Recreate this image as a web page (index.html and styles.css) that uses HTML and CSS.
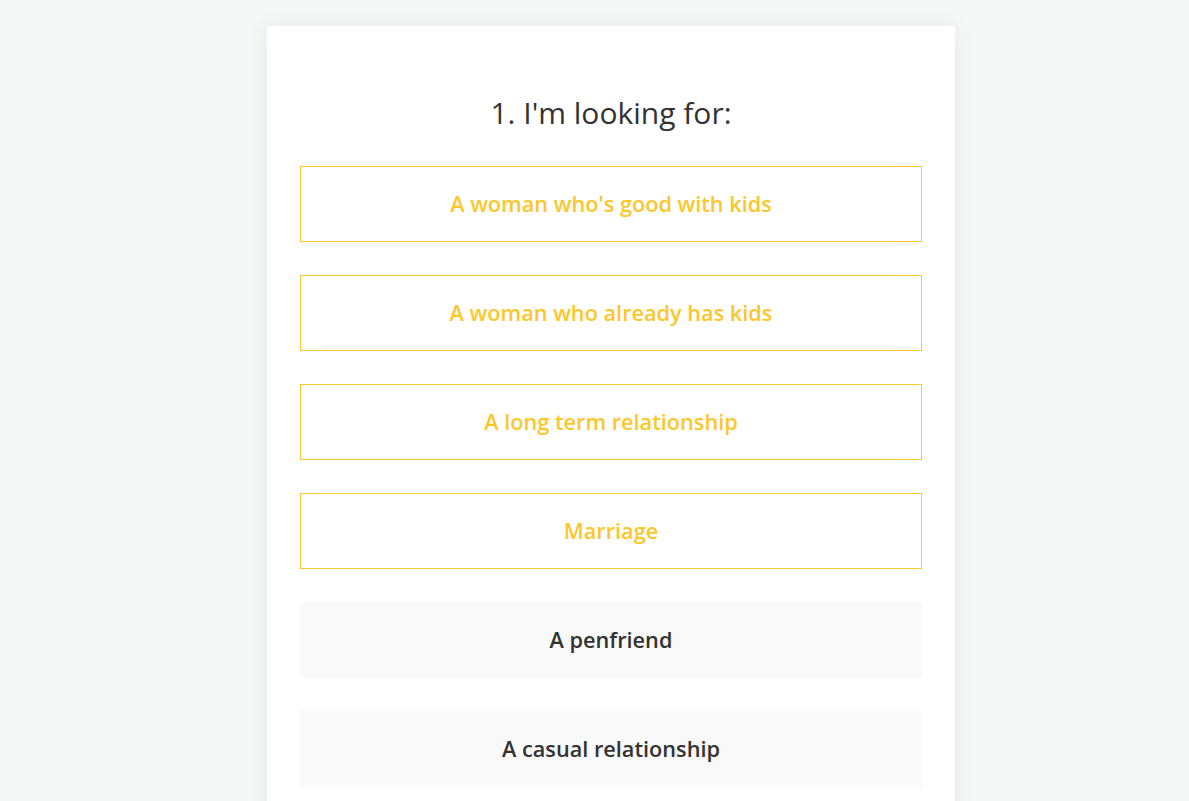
FILE: index.html
```html
<!DOCTYPE html>
<html lang="en">
<head>
    <meta charset="UTF-8">
    <meta name="viewport" content="width=device-width, initial-scale=1.0">
    <title>Quiz</title>
    <link rel="stylesheet" href="styles.css">
</head>
<body>
    <div class="quiz-card">
        <h2 class="question">1. I'm looking for:</h2>
        <div class="answers">
            <button class="answer answer-outline">A woman who's good with kids</button>
            <button class="answer answer-outline">A woman who already has kids</button>
            <button class="answer answer-outline">A long term relationship</button>
            <button class="answer answer-outline">Marriage</button>
            <button class="answer answer-plain">A penfriend</button>
            <button class="answer answer-plain">A casual relationship</button>
        </div>
    </div>
</body>
</html>
```

FILE: styles.css
```css
body {
    font-family: 'Open Sans', 'Liberation Sans', sans-serif;
    margin: 0;
    padding: 26px 0 0 33px;
    background: #f6f7f7;
    display: flex;
    justify-content: center;
    min-height: 100vh;
    box-sizing: border-box;
}

.quiz-card {
    background: #ffffff;
    width: 688px;
    padding: 59px 33px 40px;
    box-sizing: border-box;
    box-shadow: 0 0 20px rgba(0, 0, 0, 0.07);
}

.question {
    margin: 0 0 25px;
    text-align: center;
    font-size: 30px;
    font-weight: 400;
    line-height: 56px;
    color: #333333;
}

.answers {
    display: flex;
    flex-direction: column;
    gap: 33px;
}

.answer {
    height: 76px;
    width: 100%;
    padding: 0 0 2px;
    font-family: inherit;
    font-size: 21.7px;
    font-weight: 600;
    cursor: pointer;
    text-align: center;
}

.answer-outline {
    background: #ffffff;
    border: 1px solid #fdc62a;
    color: #fdc62a;
}

.answer-plain {
    background: #f9f9f9;
    border: none;
    color: #333333;
}
```
